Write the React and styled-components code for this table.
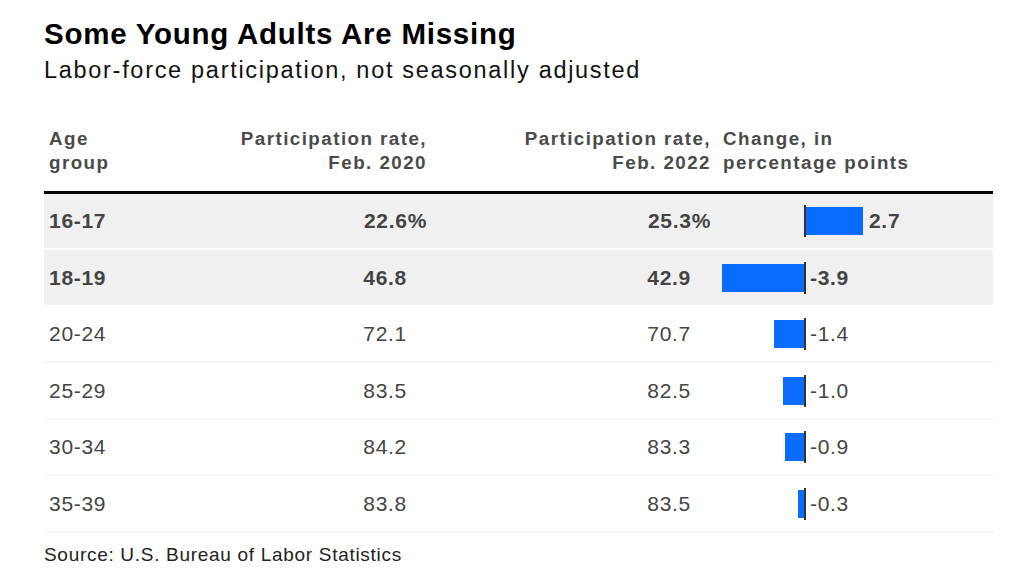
import React from 'react'
import styled, { createGlobalStyle } from 'styled-components'

const GlobalStyle = createGlobalStyle`
  body {
    margin: 0;
    background: #fff;
    font-family: "Liberation Sans", Arial, sans-serif;
  }
`

const rows = [
  { age: '16-17', feb20: '22.6', feb22: '25.3', change: 2.7, pct: true, shaded: true },
  { age: '18-19', feb20: '46.8', feb22: '42.9', change: -3.9, shaded: true },
  { age: '20-24', feb20: '72.1', feb22: '70.7', change: -1.4 },
  { age: '25-29', feb20: '83.5', feb22: '82.5', change: -1.0 },
  { age: '30-34', feb20: '84.2', feb22: '83.3', change: -0.9 },
  { age: '35-39', feb20: '83.8', feb22: '83.5', change: -0.3 },
]

const SCALE = 21.1
const NEG_WIDTH = 82

const Page = styled.div`
  width: 1024px;
  height: 588px;
  box-sizing: border-box;
  padding: 17px 31px 0 44px;
  overflow: hidden;
`

const Title = styled.h1`
  margin: 0;
  font-size: 29.5px;
  line-height: 34px;
  font-weight: 700;
  letter-spacing: 0.75px;
  color: #000;
`

const Subtitle = styled.h2`
  margin: 5px 0 0;
  font-size: 23.5px;
  line-height: 28px;
  font-weight: 400;
  letter-spacing: 1.7px;
  color: #111;
`

const Grid = styled.div`
  display: grid;
  grid-template-columns: 183px 200px 284px 1fr;
  align-items: center;
`

const HeadRow = styled(Grid)`
  margin-top: 42.6px;
  padding-bottom: 16.4px;
  border-bottom: 3px solid #000;
  align-items: start;
`

const HeadCell = styled.div`
  font-size: 18.8px;
  line-height: 24px;
  font-weight: 700;
  letter-spacing: 1.45px;
  color: #4a4a4a;
  text-align: ${p => (p.$right ? 'right' : 'left')};
  padding-left: ${p => p.$pl || 0}px;
`

const Row = styled(Grid)`
  height: 56.5px;
  box-sizing: border-box;
  background: ${p => (p.$shaded ? '#f0f0f0' : '#fff')};
  border-bottom: 2px solid ${p => (p.$shaded ? '#fff' : '#f5f5f5')};
`

const Cell = styled.div`
  font-size: 21px;
  letter-spacing: 0.7px;
  font-weight: ${p => (p.$bold ? 700 : 400)};
  color: #444;
  text-align: ${p => (p.$right ? 'right' : 'left')};
  padding-left: ${p => p.$pl || 0}px;
  padding-right: ${p => p.$pr || 0}px;
`

const Pct = styled.span`
  margin-right: -20px;
`

const Chart = styled.div`
  display: flex;
  align-items: center;
  padding-left: 11px;
`

const NegArea = styled.div`
  width: ${NEG_WIDTH}px;
  display: flex;
  justify-content: flex-end;
`

const Bar = styled.div`
  height: 28px;
  background: #0a6cff;
`

const Axis = styled.div`
  width: 2px;
  height: 32px;
  background: #333;
`

const BarLabel = styled.span`
  margin-left: ${p => p.$ml}px;
  font-size: 21px;
  letter-spacing: 0.7px;
  font-weight: ${p => (p.$bold ? 700 : 400)};
  color: #444;
`

const Source = styled.div`
  margin-top: 10px;
  font-size: 19px;
  line-height: 24px;
  letter-spacing: 0.7px;
  color: #222;
`

const ChangeBar = ({ value, bold }) => {
  const w = Math.abs(value) * SCALE
  return (
    <Chart>
      <NegArea>{value < 0 && <Bar style={{ width: w }} />}</NegArea>
      <Axis />
      {value > 0 && <Bar style={{ width: w }} />}
      <BarLabel $bold={bold} $ml={value > 0 ? 6 : 4}>
        {value.toFixed(1)}
      </BarLabel>
    </Chart>
  )
}

const App = () => (
  <Page>
    <GlobalStyle />
    <Title>Some Young Adults Are Missing</Title>
    <Subtitle>Labor-force participation, not seasonally adjusted</Subtitle>
    <HeadRow>
      <HeadCell $pl={5}>Age<br />group</HeadCell>
      <HeadCell $right>Participation rate,<br />Feb. 2020</HeadCell>
      <HeadCell $right>Participation rate,<br />Feb. 2022</HeadCell>
      <HeadCell $pl={12}>Change, in<br />percentage points</HeadCell>
    </HeadRow>
    {rows.map(r => (
      <Row key={r.age} $shaded={r.shaded}>
        <Cell $bold={r.shaded} $pl={5}>{r.age}</Cell>
        <Cell $bold={r.shaded} $right $pr={20}>
          {r.feb20}{r.pct && <Pct>%</Pct>}
        </Cell>
        <Cell $bold={r.shaded} $right $pr={20}>
          {r.feb22}{r.pct && <Pct>%</Pct>}
        </Cell>
        <ChangeBar value={r.change} bold={r.shaded} />
      </Row>
    ))}
    <Source>Source: U.S. Bureau of Labor Statistics</Source>
  </Page>
)

export default App
